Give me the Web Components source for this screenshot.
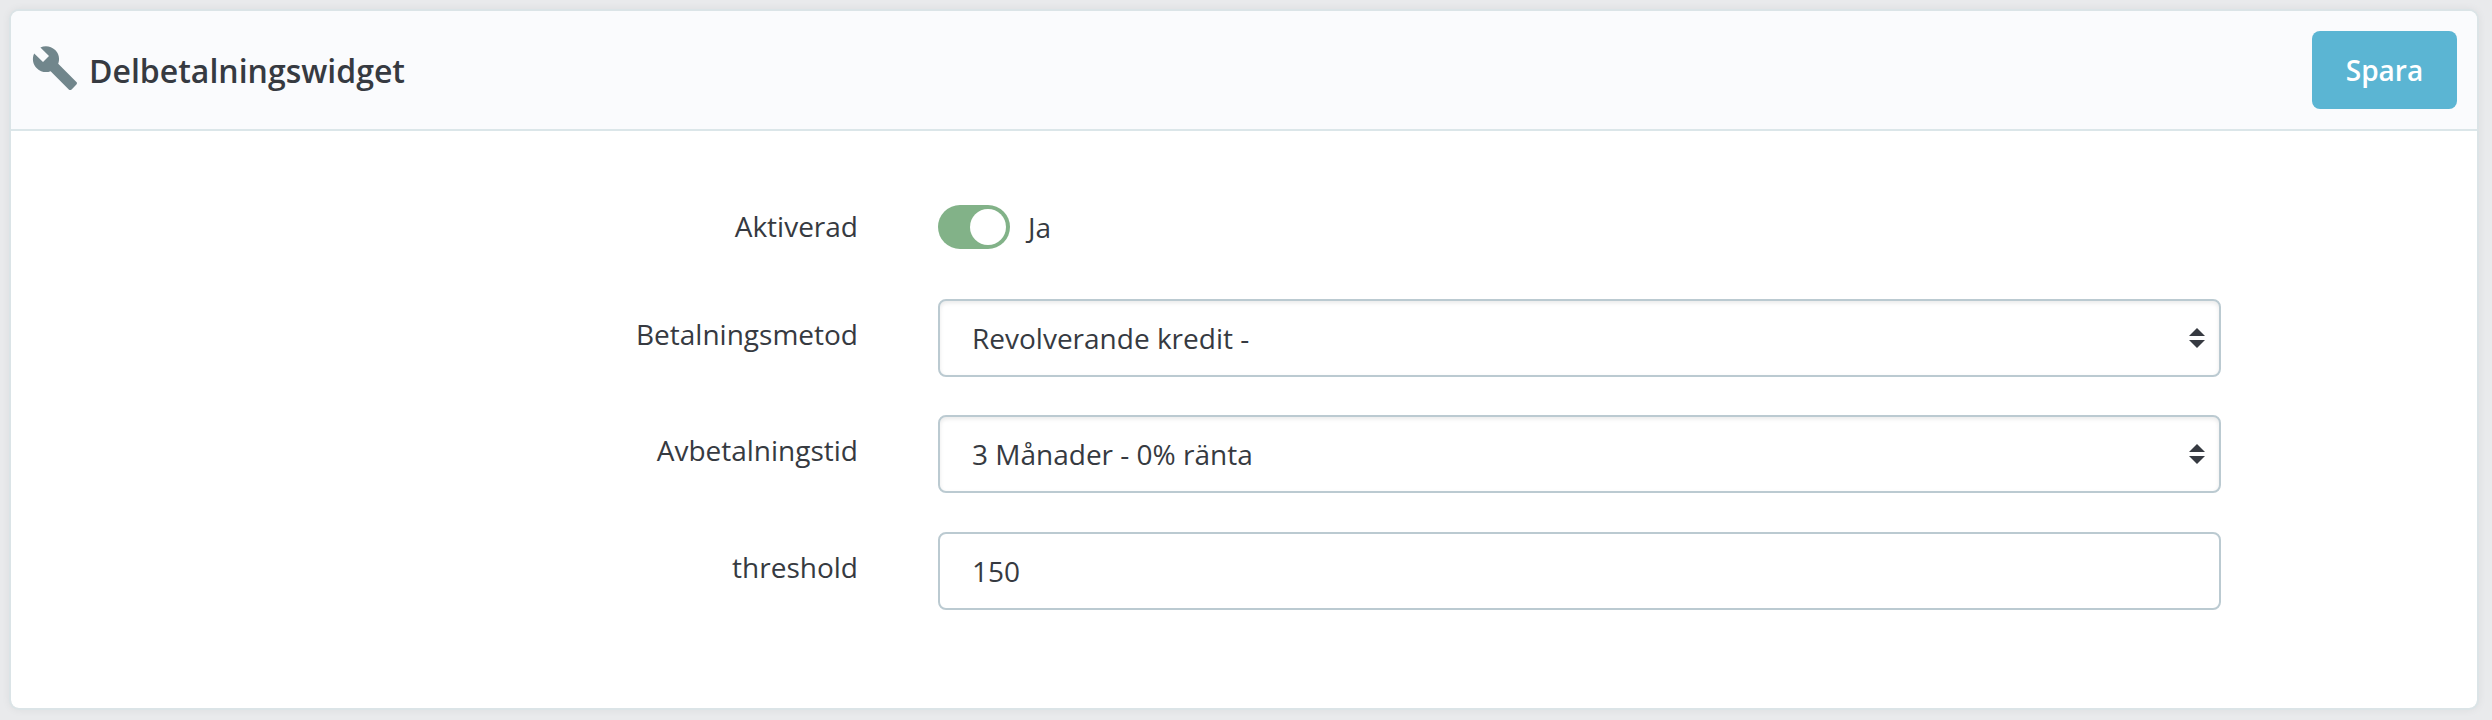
<!DOCTYPE html>
<html lang="sv">
<head>
<meta charset="utf-8">
<title>Delbetalningswidget</title>
<style>
html,body{margin:0;height:720px;overflow:hidden;background:#e9eaec}
body{font:28px/38px "Open Sans",sans-serif;color:#363a41;box-sizing:border-box;padding:9px 13px 10px 9px}
</style>
</head>
<body>
<settings-panel heading="Delbetalningswidget">
  <save-button slot="action">Spara</save-button>
  <form-row label="Aktiverad" class="switch"><toggle-switch>Ja</toggle-switch></form-row>
  <form-row label="Betalningsmetod"><select-box>Revolverande kredit -</select-box></form-row>
  <form-row label="Avbetalningstid" class="tall"><select-box>3 Månader - 0% ränta</select-box></form-row>
  <form-row label="threshold"><text-box>150</text-box></form-row>
</settings-panel>
<script>
class Base extends HTMLElement {
  constructor() {
    super();
    this.attachShadow({ mode: 'open' }).innerHTML = this.constructor.markup;
  }
}
customElements.define('settings-panel', class extends Base {
  static markup = `<style>
    :host{display:flex;flex-direction:column;box-sizing:border-box;height:701px;border:2px solid #dbe4e7;border-radius:10px;background:#fff;background-clip:padding-box;box-shadow:0 0 8px rgba(0,0,0,.06)}
    header{display:flex;align-items:center;box-sizing:border-box;height:120px;flex:none;padding:0 20px;background:#fafbfd;border-bottom:2px solid #dbe6e9;border-radius:8px 8px 0 0}
    svg{width:48px;height:48px;fill:#71868c;margin:0 10px 4px 0}
    h3{margin:0;padding-top:2px;flex:1;font-size:32px;line-height:44px;font-weight:600}
    main{display:grid;padding-top:74px}
  </style>
  <header>
    <svg viewBox="0 0 24 24"><path d="M22.7 19l-9.1-9.1c.9-2.3.4-5-1.5-6.9-2-2-5-2.4-7.4-1.3L9 6 6 9 1.6 4.7C.4 7.1.9 10.1 2.9 12.1c1.9 1.9 4.6 2.4 6.9 1.5l9.1 9.1c.4.4 1 .4 1.4 0l2.3-2.3c.5-.4.5-1.1.1-1.4z"/></svg>
    <h3></h3><slot name="action"></slot>
  </header>
  <main><slot></slot></main>`;
  connectedCallback() { this.shadowRoot.querySelector('h3').textContent = this.getAttribute('heading'); }
});
customElements.define('save-button', class extends Base {
  static markup = `<style>
    :host{display:flex;align-items:center;justify-content:center;width:145px;height:78px;border-radius:8px;background:#5bb5d3;color:#fff;font-weight:600}
  </style><slot></slot>`;
});
customElements.define('form-row', class extends Base {
  static markup = `<style>
    :host{display:grid;grid-template-columns:847px 1283px;column-gap:80px;height:116px}
    :host(.tall){height:117px}
    :host(.switch){height:94px}
    .label{text-align:right;padding-top:16px}
    :host(.switch) .label{padding-top:2px}
  </style><div class="label"></div><slot></slot>`;
  connectedCallback() { this.shadowRoot.querySelector('.label').textContent = this.getAttribute('label'); }
});
customElements.define('toggle-switch', class extends Base {
  static markup = `<style>
    :host{display:flex;align-items:flex-start}
    .track{box-sizing:border-box;width:72px;height:44px;padding:4px;border-radius:22px;background:#82b288;display:flex;justify-content:flex-end;margin-right:18px}
    .knob{width:36px;height:36px;border-radius:50%;background:#fff}
    .state{padding-top:3px}
  </style><div class="track"><div class="knob"></div></div><div class="state"><slot></slot></div>`;
});
const field = `:host{display:flex;align-items:center;justify-content:space-between;box-sizing:border-box;height:78px;border:2px solid #bbcad1;border-radius:8px;background:#fff;padding:0 14px 0 32px}`;
customElements.define('select-box', class extends Base {
  static markup = `<style>${field}
    :host{box-shadow:inset 0 2px 4px rgba(0,0,0,.09)}
    svg{width:16px;height:20px;fill:#363a41}
  </style><span><slot></slot></span><svg viewBox="0 0 16 20"><path d="M8 0l8 8H0zM0 12h16l-8 8z"/></svg>`;
});
customElements.define('text-box', class extends Base {
  static markup = `<style>${field}</style><span><slot></slot></span>`;
});
</script>
</body>
</html>
